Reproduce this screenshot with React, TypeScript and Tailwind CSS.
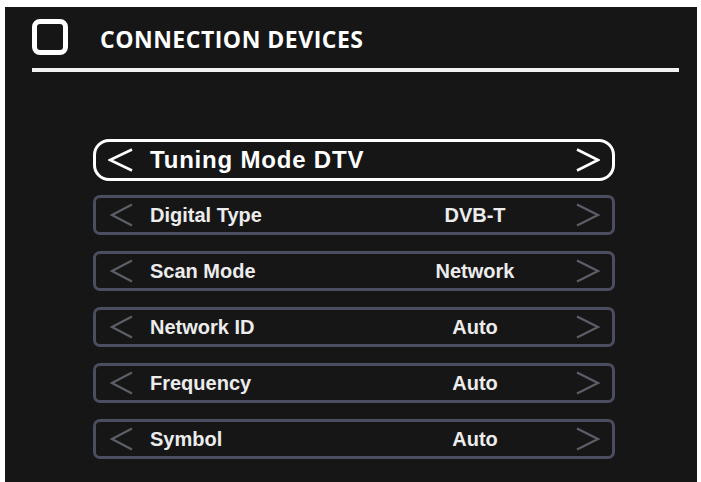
import React from "react";

function LeftArrow({ color, w, sw }: { color: string; w: number; sw: number }) {
  return (
    <svg width={w} height="24" viewBox={`0 0 ${w} 24`} fill="none" className="shrink-0">
      <path d={`M${w - 1} 1.5 L2 12 L${w - 1} 22.5`} stroke={color} strokeWidth={sw} strokeLinejoin="miter" strokeLinecap="butt" />
    </svg>
  );
}

function RightArrow({ color, w, sw }: { color: string; w: number; sw: number }) {
  return (
    <svg width={w} height="24" viewBox={`0 0 ${w} 24`} fill="none" className="shrink-0">
      <path d={`M1 1.5 L${w - 2} 12 L1 22.5`} stroke={color} strokeWidth={sw} strokeLinejoin="miter" strokeLinecap="butt" />
    </svg>
  );
}

const rows = [
  { label: "Digital Type", value: "DVB-T" },
  { label: "Scan Mode", value: "Network" },
  { label: "Network ID", value: "Auto" },
  { label: "Frequency", value: "Auto" },
  { label: "Symbol", value: "Auto" },
];

export default function App() {
  return (
    <div className="w-[701px] h-[482px] bg-white pt-[7px] pl-[5px] pr-[4px] overflow-hidden">
      <div className="w-[692px] h-[475px] bg-[#161616] flex flex-col">
        {/* header */}
        <div className="flex items-center mt-[12px] ml-[27px]">
          <div className="w-[36px] h-[36px] border-[5px] border-white rounded-[8px] shrink-0" />
          <div
            className="ml-[32px] mt-[4px] text-white text-[23px] leading-none font-bold tracking-[0.5px] whitespace-nowrap"
            style={{ fontFamily: '"Open Sans", "Liberation Sans", sans-serif' }}
          >
            CONNECTION DEVICES
          </div>
        </div>
        <div className="ml-[27px] mt-[13px] w-[647px] h-[4px] bg-[#f2f2f2]" />

        {/* menu */}
        <div
          className="ml-[88px] mt-[67px] w-[522px] flex flex-col"
          style={{ fontFamily: '"Liberation Sans", Arial, sans-serif' }}
        >
          <div className="h-[42px] border-[3px] border-white rounded-[16px] flex items-center pl-[12px] pr-[12px]">
            <LeftArrow color="#ffffff" w={25} sw={2.6} />
            <div className="ml-[17px] flex-1 text-white text-[24px] font-bold tracking-[0.8px] whitespace-nowrap">
              Tuning Mode DTV
            </div>
            <RightArrow color="#ffffff" w={24} sw={2.6} />
          </div>

          <div className="mt-[14px] flex flex-col gap-[16px]">
            {rows.map((r) => (
              <div
                key={r.label}
                className="h-[40px] border-[3px] border-[#4a4e60] rounded-[7px] flex items-center pl-[14px] pr-[12px]"
              >
                <LeftArrow color="#5b5e68" w={23} sw={2.4} />
                <div className="ml-[17px] flex-1 text-[#ececec] text-[20px] font-bold whitespace-nowrap">
                  {r.label}
                </div>
                <div className="w-[160px] text-center text-[#ececec] text-[20px] font-bold whitespace-nowrap">
                  {r.value}
                </div>
                <div className="ml-[21px]">
                  <RightArrow color="#5b5e68" w={24} sw={2.4} />
                </div>
              </div>
            ))}
          </div>
        </div>
      </div>
    </div>
  );
}
